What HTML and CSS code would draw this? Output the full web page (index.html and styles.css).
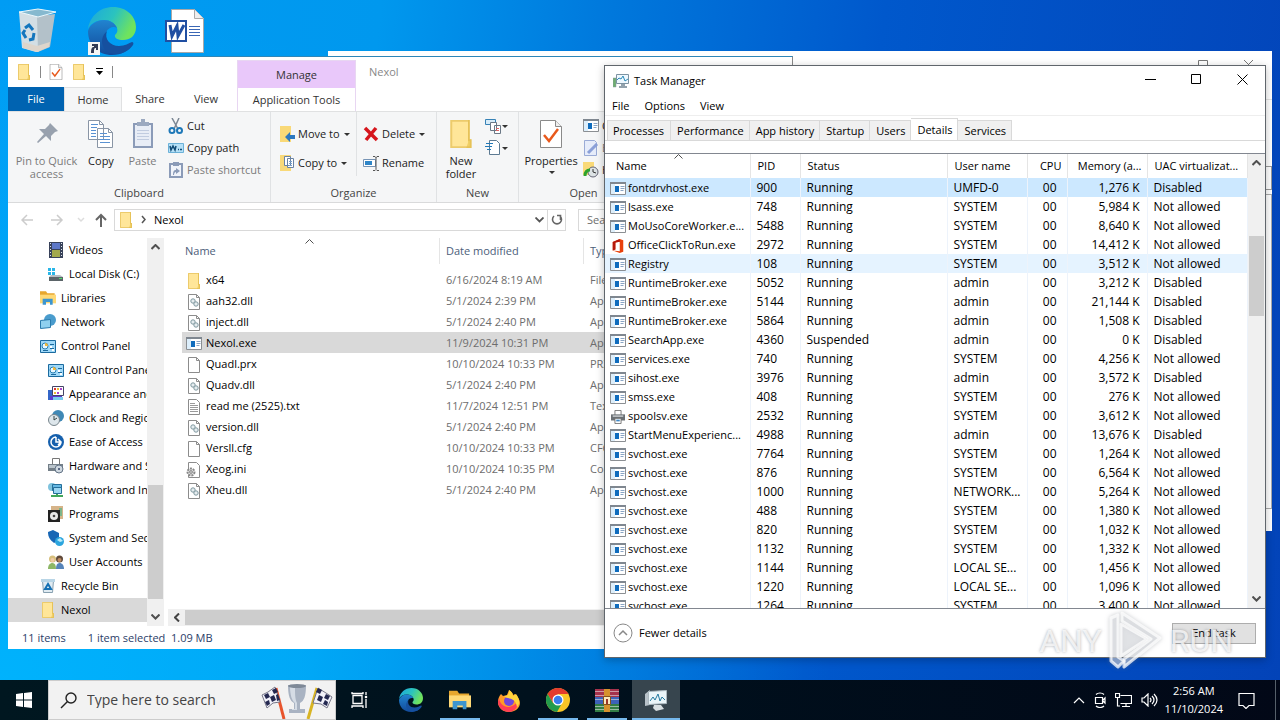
FILE: index.html
```html
<!DOCTYPE html>
<html lang="en">
<head>
<meta charset="utf-8">
<title>Desktop</title>
<link rel="stylesheet" href="styles.css">
</head>
<body>
<svg class="sprite" aria-hidden="true">
  <symbol id="exe" viewBox="0 0 16 14"><path fill="#fff" stroke="#8b8f93" d="M.5.5h15v12H.5z"/><path fill="#7f8790" d="M0 0h16v2H0z"/><path fill="#dceefb" d="M1 2h4v10H1z"/><path fill="#0f6cbd" d="M5 4h4v6H5z"/><path stroke="#8aa5c4" d="M10.500 4.500h4M10.500 6.500h4M10.500 8.500h3"/></symbol>
  <symbol id="folder" viewBox="0 0 16 16"><path fill="#f0cf66" d="M2 0h11v11h1v5H2z"/><path fill="#ffe699" d="M2 0h10v13l-1 3H2z"/><path fill="none" stroke="#dfb94e" d="M2.500.5h10v11h1v4h-11z" opacity=".6"/></symbol>
  <symbol id="page" viewBox="0 0 16 16"><path fill="#fff" stroke="#8c8c8c" d="M2.500.5h8l3 3v12h-11z"/><path fill="none" stroke="#8c8c8c" d="M10.500.5v3h3"/></symbol>
  <symbol id="dll" viewBox="0 0 16 16"><path fill="#fff" stroke="#8c8c8c" d="M2.500.5h8l3 3v12h-11z"/><path fill="none" stroke="#8c8c8c" d="M10.500.5v3h3"/><circle cx="7" cy="7" r="2.200" fill="#e5ecef" stroke="#7f989f"/><circle cx="10" cy="10" r="2.200" fill="#e5ecef" stroke="#7f989f"/></symbol>
  <symbol id="txt" viewBox="0 0 16 16"><path fill="#fff" stroke="#8c8c8c" d="M2.500.5h8l3 3v12h-11z"/><path stroke="#9a9a9a" d="M4 4.500h5M4 6.500h8M4 8.500h8M4 10.500h8M4 12.500h8"/></symbol>
  <symbol id="ini" viewBox="0 0 16 16"><path fill="#fff" stroke="#8c8c8c" d="M2.500.5h8l3 3v12h-11z"/><circle cx="5" cy="10" r="3.500" fill="#ddd" stroke="#888" stroke-width="2" stroke-dasharray="2 1"/><circle cx="5" cy="10" r="1.300" fill="#fff" stroke="#777"/></symbol>
  <symbol id="check" viewBox="0 0 22 28"><path fill="#fff" stroke="#8a8a8a" d="M.5.500h15l6 6v21H.5z"/><path fill="#eee" stroke="#8a8a8a" d="M15.500.5v6h6"/><path fill="none" stroke="#e8591c" stroke-width="2.500" d="M4 15l5 6 9-12"/></symbol>
  <symbol id="office" viewBox="0 0 16 16"><path fill="#e8400c" d="M10 0l4 1.500v13L10 16l-8-3 8 1V3L5 4v8l-3 1V3.500z"/><path fill="#b5180c" d="M2 3.500L10 0v3L5 4v8l-3 1z"/></symbol>
  <symbol id="printer" viewBox="0 0 16 16"><path fill="#fff" stroke="#6b6b6b" d="M4.500.5h7v6h-7z"/><path fill="#6b7074" d="M0 5h16v7H0z"/><path fill="#b9bdc0" d="M2 6h12v2H2z"/><path fill="#fff" stroke="#6b6b6b" d="M4.500 9.500h7v6h-7z"/><path fill="#3b86c6" d="M6 11h4v2H6z"/></symbol>
  <symbol id="cpl" viewBox="0 0 16 13"><path fill="#9ed8f8" stroke="#1b6a9e" d="M.5.5h15v12H.5z"/><circle cx="5" cy="6" r="3" fill="#e9f8ff" stroke="#2780b4"/><path fill="#f1b93c" d="M5 6V3a3 3 0 0 1 3 3z"/><path stroke="#1b6a9e" d="M10 4.500h4M10 8.500h4M3 10.500h5"/><path fill="#fff" d="M10 6h2v2h-2zM12 9h2v2h-2z"/></symbol>
  <symbol id="pulse" viewBox="0 0 16 15"><path fill="#eef8ff" stroke="#7d93a2" d="M3.500.5h12v9h-12z"/><path fill="none" stroke="#2c8bb8" d="M4 6l2-2 2 1 2-3 2 5 3-2"/><path fill="#6fae70" stroke="#8b9ba5" stroke-width=".5" d="M0 4h3v9H0z"/><path fill="#93a2ad" d="M8 10h4v2h2v2H6v-2h2z"/></symbol>
  <symbol id="edge" viewBox="0 0 48 48"><defs><linearGradient id="eg" x1="0" y1="0" x2="1" y2=".4"><stop offset="0" stop-color="#1ba7df"/><stop offset=".55" stop-color="#2bc3be"/><stop offset="1" stop-color="#70e35d"/></linearGradient><linearGradient id="eb" x1="0" y1="0" x2="0" y2="1"><stop offset="0" stop-color="#2184d0"/><stop offset="1" stop-color="#124a9a"/></linearGradient></defs><path fill="url(#eg)" d="M0 22C2 9 12 0 25 0c14 0 23 10 23 20 0 9-6 13-13 13-5 0-9-2-8-5 2-2 3-4 2-7-2-5-7-8-13-8C8 13 2 17 0 22z"/><path fill="url(#eb)" d="M0 24c2-7 9-11 16-11 6 0 11 3 13 8-3-2-8-1-11 4-4 8 3 17 14 17 5 0 9-2 12-4-3 5-10 10-20 10C10 48 0 38 0 24z"/><path fill="#16509f" d="M19 24c-3 8 3 15 12 15 6 0 10-3 13-4 1 0 2 1 1 3-4 6-11 9-17 9-13 0-19-14-9-23z"/></symbol>
  <symbol id="libs" viewBox="0 0 24 20"><path fill="#e7a72e" d="M0 0h9l2 3h11v5H0z"/><path fill="#ffd976" d="M0 5h24v13H0z"/><path fill="#3d95cf" d="M4 11h15v9h-4v-4H9v4H4z"/></symbol>
</svg>

<main class="desktop">
  <div class="shortcuts">
    <svg width="44" height="48" viewBox="0 0 44 48"><path fill="#d3dee4" d="M4 5l19 4 1 36-3 0-14-4z"/><path fill="#b3c1c9" d="M22 9l18-2-5 33-12 5z"/><path fill="#86b9cf" stroke="#eef8fc" d="M4 5l19-3 18 3-18 5z"/><path fill="#ded5cb" d="M8 35l14 4 13-4-1 5-12 5-14-4z"/><g fill="none" stroke="#1476bd" stroke-width="3"><path d="M10 21l4-3 4 5M19 26l-1 6-4 1M11 31l-3-5 2-3"/></g></svg>
    <svg class="edge-shortcut" width="48" height="48" viewBox="0 0 48 48"><use href="#edge"/><path fill="#f5f5f5" d="M0 35h12v13H0z"/><path fill="#333b55" d="M3 46c0-5 1-6 3-6v-1H4v-2h6v6H8v-2c-2 0-2 1-2 5z"/></svg>
    <svg width="40" height="44" viewBox="0 0 40 44"><path fill="#fff" stroke="#a8a8a8" d="M6.500.5h23l9 9v34h-32z"/><path fill="#eee" stroke="#aaa" d="M29.500.5v9h9"/><path stroke="#3b67b5" d="M24 17.500h11M24 20.500h11M24 23.500h11M24 26.500h11"/><path fill="#fff" stroke="#204fa2" stroke-width="2" d="M1 12h20v20H1z"/><path fill="none" stroke="#204fa2" stroke-width="3" d="M5 16l2 11 5-10 1 10 6-11"/></svg>
  </div>

  <section class="window back" aria-label="Background window">
    <div class="back-title"><svg width="60" height="12" viewBox="0 0 60 12" fill="none" stroke="#777"><path d="M2.500 1.500h9v9h-9zM48 1l9 9M57 1l-9 9"/></svg></div>
    <div class="back-tools"></div>
    <div class="back-body"></div>
  </section>

  <section class="window explorer" aria-label="Nexol">
    <header class="ex-head">
      <div class="ex-left">
        <div class="quick">
          <svg width="16" height="16"><use href="#folder"/></svg><i></i>
          <svg width="14" height="16"><use href="#check"/></svg>
          <svg width="16" height="16"><use href="#folder"/></svg>
          <svg width="9" height="8" viewBox="0 0 9 8"><path d="M1 0h7v1H1zM1 3h7L4.500 7z"/></svg><i></i>
        </div>
        <nav class="tabs"><button class="file">File</button><button class="on">Home</button><button>Share</button><button>View</button></nav>
      </div>
      <div class="manage"><div>Manage</div><button>Application Tools</button></div>
      <div class="ex-title">Nexol</div>
    </header>

    <div class="ribbon">
      <div class="group clipboard">
        <div class="body">
          <button class="big off pin"><svg width="30" height="30" viewBox="0 0 30 30"><path fill="#98a1ae" d="M18 4l8 8-3 1-4 4v5l-5-5-8 7-1-1 7-8-5-5h6l4-4z"/></svg>Pin to Quick<br>access</button>
          <button class="big copy"><svg width="26" height="30" viewBox="0 0 26 30"><path fill="#fff" stroke="#8995a5" d="M.5 1.500h11l4 4v15H.5zM9.500 9.500h11l4 4v15h-15z"/><path stroke="#5a92d2" d="M3 5.500h7M3 8.500h6M3 11.500h5M3 14.500h5M3 17.500h5M12 14.500h7M12 17.500h10M12 20.500h10M12 23.500h10"/><path fill="none" stroke="#8995a5" d="M20.500 9.500v4h4M11.500 1.500v4h4"/></svg>Copy</button>
          <button class="big off paste"><svg width="22" height="30" viewBox="0 0 22 30"><path fill="#e8edf6" stroke="#8b9bb8" stroke-width="2" d="M2 5h18v23H2z"/><path fill="#9ba9c0" d="M5 3h4V0h4v3h4v4H5z"/><path stroke="#c1cce0" d="M5 11.500h12M5 14.500h12M5 17.500h12M5 20.500h12"/></svg>Paste</button>
          <div class="stack">
            <button><svg width="16" height="16" viewBox="0 0 16 16"><path stroke="#7b8794" stroke-width="1.500" d="M4 0l6 11M11 0L6 11"/><g fill="none" stroke="#1e78b8" stroke-width="2"><circle cx="4" cy="12.500" r="2.500"/><circle cx="11.500" cy="12.500" r="2.500"/></g></svg>Cut</button>
            <button><svg width="16" height="16" viewBox="0 0 16 16"><path fill="#b5e0f7" stroke="#6bb1d8" d="M.5 3.500h15v9H.5z"/><path fill="none" stroke="#124c77" stroke-width="1.500" d="M2 6l1 4 2-4 2 4 1-4M10 9.500h1M12 9.500h2"/></svg>Copy path</button>
            <button class="off"><svg width="16" height="16" viewBox="0 0 16 16"><path fill="#f1f4fa" stroke="#8b9bb8" stroke-width="2" d="M2 2h12v13H2z"/><path fill="#8b9bb8" d="M5 0h6v4H5zM5 13c0-4 1-5 3-5V6l4 3-4 3v-2c-1 0-2 1-2 3z"/></svg>Paste shortcut</button>
          </div>
        </div>
        <div class="caption">Clipboard</div>
      </div>
      <div class="group organize">
        <div class="body">
          <div class="stack pair">
            <button><svg width="16" height="16" viewBox="0 0 16 16"><path fill="#f9d978" d="M1 0h11v16H1z"/><path fill="#2d78bf" d="M16 9v4h-5v3l-5-5 5-5v3z"/></svg>Move to<b class="caret"></b></button>
            <button><svg width="16" height="16" viewBox="0 0 16 16"><path fill="#f9d978" d="M1 0h11v16H1z"/><path fill="#fff" stroke="#6982a3" d="M5.500 1.500h6v9h-6zM8.500 3.500h6v9h-6z"/><path stroke="#76a0cc" d="M10 6.500h3M10 8.500h3M10 10.500h3"/></svg>Copy to<b class="caret"></b></button>
          </div>
          <div class="stack pair second">
            <button><svg width="16" height="16" viewBox="0 0 16 16"><path stroke="#d6161d" stroke-width="3.500" d="M2 2l12 12M13 2L3 14"/></svg>Delete<b class="caret"></b></button>
            <button><svg width="16" height="16" viewBox="0 0 16 16"><path fill="#fff" stroke="#7794b5" d="M.5 4.500h12v7H.5z"/><path fill="#2f86c8" d="M2 6h7v4H2z"/><path fill="none" stroke="#555" d="M10 1.500h2l1 1 1-1h2M13 2v12M10 15.500h2l1-1 1 1h2"/></svg>Rename</button>
          </div>
        </div>
        <div class="caption">Organize</div>
      </div>
      <div class="group new">
        <div class="body">
          <button class="big newf"><svg width="28" height="30"><use href="#folder"/></svg>New<br>folder</button>
          <div class="stack">
            <button aria-label="New item"><svg width="16" height="16" viewBox="0 0 16 16"><path fill="#d7ecf9" stroke="#3782b6" d="M.5 1.500h10v5H.5z"/><path fill="#fff" stroke="#6b7886" d="M5.500 4.500h6v8h-6zM9.500 7.500h6v8h-6z"/><path stroke="#d66" d="M11 10.500h3M11 12.500h3"/></svg><b class="caret"></b></button>
            <button aria-label="Easy access"><svg width="16" height="16" viewBox="0 0 16 16"><path fill="#fff" stroke="#5d7a92" d="M4.500.5h7l3 3v11h-10z"/><path stroke="#2179b8" d="M1 3.500h7M0 6.500h7M2 9.500h4"/></svg><b class="caret"></b></button>
          </div>
        </div>
        <div class="caption">New</div>
      </div>
      <div class="group open">
        <div class="body">
          <button class="big props"><svg width="22" height="30"><use href="#check"/></svg>Properties<b class="caret"></b></button>
          <div class="stack">
            <button><svg width="16" height="14"><use href="#exe"/></svg>Open</button>
            <button class="off"><svg width="16" height="16" viewBox="0 0 16 16"><path fill="#e6ecfa" stroke="#9aabd6" d="M1.500.5h10l2 2v13h-12z"/><path stroke="#8ba0d8" stroke-width="3" d="M5 13l9-9"/></svg>Edit</button>
            <button><svg width="16" height="16" viewBox="0 0 16 16"><path fill="#f9d978" d="M0 0h11v13H0z"/><circle cx="10" cy="10" r="5" fill="#dde3e5" stroke="#667"/><path fill="none" stroke="#2da32d" stroke-width="3" d="M2 14c0-4 2-6 5-6"/><path fill="none" stroke="#333" d="M10 7v3l3 1"/></svg>History</button>
          </div>
        </div>
        <div class="caption">Open</div>
      </div>
    </div>

    <div class="address">
      <svg class="arrows" width="86" height="16" viewBox="0 0 86 16" fill="none" stroke-width="1.500"><path stroke="#ccc" d="M12 8H1M6 3L1 8l5 5M30 8h11M36 3l5 5-5 5"/><path stroke="#ddd" d="M57 6l3 3 3-3"/><path stroke="#666" stroke-width="2" d="M80 15V3M75 8l5-5 5 5"/></svg>
      <div class="path"><svg width="16" height="16"><use href="#folder"/></svg><svg width="6" height="9" viewBox="0 0 6 9"><path fill="none" stroke="#555" stroke-width="1.500" d="M1 1l3 3.500L1 8"/></svg><span>Nexol</span>
        <svg width="9" height="6" viewBox="0 0 9 6"><path fill="none" stroke="#555" stroke-width="1.800" d="M.5.5l4 4 4-4"/></svg></div>
      <button class="refresh" aria-label="Refresh"><svg width="12" height="13" viewBox="0 0 12 13"><path fill="none" stroke="#666" stroke-width="1.600" d="M3 3a4.500 4.500 0 1 0 6 0M9.500 7V2.500H6"/></svg></button>
      <input class="find" type="search" aria-label="Search Nexol" placeholder="Search Nexol">
    </div>

    <div class="content">
      <nav class="tree">
        <a href="#" class="sub"><svg width="16" height="16" viewBox="0 0 16 16"><path fill="#38425a" d="M1 0h14v16H1z"/><path fill="#5d78c8" d="M4 1h8v6H4z"/><path fill="#a2a94c" d="M4 8h8v7H4z"/><path stroke="#dfe5ee" stroke-dasharray="1 2" d="M2.500 1v14M13.500 1v14"/></svg>Videos</a>
        <a href="#" class="sub"><svg width="16" height="16" viewBox="0 0 16 16"><path fill="#29b6e8" d="M0 2h3v3H0zM4 2h3v3H4zM0 6h3v3H0zM4 6h3v3H4z"/><path fill="#b7bec2" d="M3 9h9l3 2H1z"/><path fill="#5b6468" d="M1 11h14v4H1z"/><path fill="#4be06b" d="M11 12h3v1h-3z"/></svg>Local Disk (C:)</a>
        <a href="#"><svg width="16" height="14"><use href="#libs"/></svg>Libraries</a>
        <a href="#"><svg width="16" height="16" viewBox="0 0 16 16"><circle cx="10" cy="6" r="6" fill="#4a9ccd"/><path fill="#8fd0ef" stroke="#2b7cae" d="M.5 6.500l10-1v8l-10 1z"/></svg>Network</a>
        <a href="#"><svg width="16" height="13"><use href="#cpl"/></svg>Control Panel</a>
        <a href="#" class="sub"><svg width="16" height="13"><use href="#cpl"/></svg>All Control Panel Items</a>
        <a href="#" class="sub"><svg width="16" height="16" viewBox="0 0 16 16"><path fill="#3466c8" d="M0 4h5v10H0z"/><path fill="#fff" stroke="#446" d="M4.500.5h11v9h-11z"/><path fill="#d33" d="M6 2h2v2H6z"/><path fill="#eb3" d="M9 2h2v2H9zM6 6h2v2H6z"/><path fill="#a4c" d="M12 2h2v2h-2zM9 6h2v2H9z"/><path fill="#5b3cd0" d="M2 10h12v4H2z"/><path fill="#7ce" d="M5 11h10v3H5z"/></svg>Appearance and Personalization</a>
        <a href="#" class="sub"><svg width="16" height="16" viewBox="0 0 16 16"><circle cx="10" cy="6" r="6" fill="#3f88b5"/><circle cx="6" cy="10" r="5.500" fill="#dde6eb" stroke="#78858c"/><path fill="none" stroke="#344" d="M6 6v4l3-2"/></svg>Clock and Region</a>
        <a href="#" class="sub"><svg width="16" height="16" viewBox="0 0 16 16"><circle cx="8" cy="8" r="8" fill="#1660ad"/><path fill="none" stroke="#fff" stroke-width="1.500" d="M13 8a5 5 0 1 1-5-5M8 3v5h5M10 5l3 3-3 3"/></svg>Ease of Access</a>
        <a href="#" class="sub"><svg width="16" height="16" viewBox="0 0 16 16"><path fill="#fff" stroke="#777" d="M4.500.5h7v6h-7z"/><path fill="#747f88" d="M0 6h15v7H0z"/><path fill="#bac4cb" d="M1 7h8v3H1z"/><circle cx="11" cy="11" r="4" fill="#cfd8e0" stroke="#647487"/><circle cx="11" cy="11" r="1" fill="#346"/></svg>Hardware and Sound</a>
        <a href="#" class="sub"><svg width="16" height="16" viewBox="0 0 16 16"><circle cx="4" cy="5" r="4" fill="#7fc3de"/><path fill="#66b9e4" stroke="#246f9b" d="M4.500 2.500h9v6h-9z"/><path fill="#9ad6f1" stroke="#246f9b" d="M5.500 5.500h8v6h-8z"/><path fill="#40a75a" d="M3 13h12v2H3zM8 12h2v3H8z"/></svg>Network and Internet</a>
        <a href="#" class="sub"><svg width="16" height="16" viewBox="0 0 16 16"><path fill="#d6b489" d="M3 0h12v13H3z"/><path fill="#7db58b" d="M11 2h3v8h-3z"/><path fill="#222" d="M0 4h12v12H0z"/><circle cx="6" cy="10" r="4" fill="#e8e8e8"/><circle cx="6" cy="10" r="1.300" fill="#444"/></svg>Programs</a>
        <a href="#" class="sub"><svg width="16" height="16" viewBox="0 0 16 16"><path fill="#1766b5" d="M0 2l5-2 6 3v5c-1 3-3 4-5 5C2 10 0 7 0 2z"/><circle cx="11.500" cy="11.500" r="4.500" fill="#2ca5de"/><path fill="#b8ebfa" d="M9 10l3-2 3 3-3 1z"/></svg>System and Security</a>
        <a href="#" class="sub"><svg width="16" height="16" viewBox="0 0 16 16"><circle cx="4.500" cy="5" r="3.500" fill="#d7bf7c"/><circle cx="11.500" cy="5" r="3.500" fill="#5f4939"/><circle cx="4.500" cy="6" r="2" fill="#f1cba6"/><circle cx="11.500" cy="6" r="2" fill="#be8b62"/><path fill="#8db765" d="M0 15c0-4 2-6 4.500-6S8 11 8 15z"/><path fill="#5684b9" d="M8 15c0-4 1-6 3.500-6S16 11 16 15z"/></svg>User Accounts</a>
        <a href="#"><svg width="16" height="16" viewBox="0 0 16 16"><path fill="#e0ebf2" stroke="#87a0b0" d="M2.500 2.500h11l-1 12h-9z"/><path fill="#b8d5e6" d="M1 1h14v3H1z"/><path fill="none" stroke="#1570b3" stroke-width="2" d="M5 11l3-5 3 5z"/></svg>Recycle Bin</a>
        <a href="#" class="on"><svg width="16" height="16"><use href="#folder"/></svg>Nexol</a>
      </nav>
      <div class="vbar tree-bar"><svg width="9" height="6"><path d="M.5 5l4-4 4 4"/></svg><div class="thumb"></div><svg width="9" height="6"><path d="M.5.5l4 4 4-4"/></svg></div>
      <div class="files">
        <table>
          <colgroup><col class="c-name"><col class="c-date"><col></colgroup>
          <thead><tr><th><span>Name</span><svg class="sort" width="9" height="5"><path d="M.5 4.500l4-4 4 4"/></svg></th><th><span>Date modified</span></th><th><span>Type</span></th></tr></thead>
          <tbody>
            <tr><td><svg><use href="#folder"/></svg>x64</td><td>6/16/2024 8:19 AM</td><td>File folder</td></tr>
            <tr><td><svg><use href="#dll"/></svg>aah32.dll</td><td>5/1/2024 2:39 PM</td><td>Application extension</td></tr>
            <tr><td><svg><use href="#dll"/></svg>inject.dll</td><td>5/1/2024 2:40 PM</td><td>Application extension</td></tr>
            <tr class="on"><td><svg><use href="#exe"/></svg>Nexol.exe</td><td>11/9/2024 10:31 PM</td><td>Application</td></tr>
            <tr><td><svg><use href="#page"/></svg>Quadl.prx</td><td>10/10/2024 10:33 PM</td><td>PRX File</td></tr>
            <tr><td><svg><use href="#dll"/></svg>Quadv.dll</td><td>5/1/2024 2:40 PM</td><td>Application extension</td></tr>
            <tr><td><svg><use href="#txt"/></svg>read me (2525).txt</td><td>11/7/2024 12:51 PM</td><td>Text Document</td></tr>
            <tr><td><svg><use href="#dll"/></svg>version.dll</td><td>5/1/2024 2:40 PM</td><td>Application extension</td></tr>
            <tr><td><svg><use href="#page"/></svg>Versll.cfg</td><td>10/10/2024 10:33 PM</td><td>CFG File</td></tr>
            <tr><td><svg><use href="#ini"/></svg>Xeog.ini</td><td>10/10/2024 10:35 PM</td><td>Configuration settings</td></tr>
            <tr><td><svg><use href="#dll"/></svg>Xheu.dll</td><td>5/1/2024 2:40 PM</td><td>Application extension</td></tr>
          </tbody>
        </table>
        <div class="hbar"><svg width="6" height="9" viewBox="0 0 6 9"><path fill="none" stroke="#444" stroke-width="2" d="M5 .5l-4 4 4 4"/></svg><div class="thumb"></div></div>
      </div>
    </div>
    <footer class="status"><span>11 items</span><span>1 item selected&nbsp; 1.09 MB</span></footer>
  </section>

  <section class="window taskman" aria-label="Task Manager">
    <header class="tm-title"><svg width="16" height="15"><use href="#pulse"/></svg><h1>Task Manager</h1>
      <button aria-label="Minimize"><svg width="11" height="11"><path d="M0 5.500h11"/></svg></button>
      <button aria-label="Maximize"><svg width="11" height="11"><path d="M.5.5h9v9h-9z"/></svg></button>
      <button aria-label="Close"><svg width="11" height="11"><path d="M.5.5l10 10M10.500.5l-10 10"/></svg></button>
    </header>
    <nav class="menu"><button>File</button><button>Options</button><button>View</button></nav>
    <div class="tm-tabs"><button>Processes</button><button>Performance</button><button>App history</button><button>Startup</button><button>Users</button><button class="on">Details</button><button>Services</button></div>
    <div class="grid">
      <div class="scroller">
        <table>
          <colgroup><col class="g-name"><col class="g-pid"><col class="g-status"><col class="g-user"><col class="g-cpu"><col class="g-mem"><col></colgroup>
          <thead><tr><th>Name<svg class="sort" width="9" height="5"><path d="M.5 4.500l4-4 4 4"/></svg></th><th>PID</th><th>Status</th><th>User name</th><th>CPU</th><th>Memory (a...</th><th>UAC virtualizat...</th></tr></thead>
          <tbody>
            <tr class="on"><td><svg><use href="#exe"/></svg>fontdrvhost.exe</td><td>900</td><td>Running</td><td>UMFD-0</td><td>00</td><td>1,276 K</td><td>Disabled</td></tr>
            <tr><td><svg><use href="#exe"/></svg>lsass.exe</td><td>748</td><td>Running</td><td>SYSTEM</td><td>00</td><td>5,984 K</td><td>Not allowed</td></tr>
            <tr><td><svg><use href="#exe"/></svg>MoUsoCoreWorker.e...</td><td>5488</td><td>Running</td><td>SYSTEM</td><td>00</td><td>8,640 K</td><td>Not allowed</td></tr>
            <tr><td><svg><use href="#office"/></svg>OfficeClickToRun.exe</td><td>2972</td><td>Running</td><td>SYSTEM</td><td>00</td><td>14,412 K</td><td>Not allowed</td></tr>
            <tr class="hover"><td><svg><use href="#exe"/></svg>Registry</td><td>108</td><td>Running</td><td>SYSTEM</td><td>00</td><td>3,512 K</td><td>Not allowed</td></tr>
            <tr><td><svg><use href="#exe"/></svg>RuntimeBroker.exe</td><td>5052</td><td>Running</td><td>admin</td><td>00</td><td>3,212 K</td><td>Disabled</td></tr>
            <tr><td><svg><use href="#exe"/></svg>RuntimeBroker.exe</td><td>5144</td><td>Running</td><td>admin</td><td>00</td><td>21,144 K</td><td>Disabled</td></tr>
            <tr><td><svg><use href="#exe"/></svg>RuntimeBroker.exe</td><td>5864</td><td>Running</td><td>admin</td><td>00</td><td>1,508 K</td><td>Disabled</td></tr>
            <tr><td><svg><use href="#exe"/></svg>SearchApp.exe</td><td>4360</td><td>Suspended</td><td>admin</td><td>00</td><td>0 K</td><td>Disabled</td></tr>
            <tr><td><svg><use href="#exe"/></svg>services.exe</td><td>740</td><td>Running</td><td>SYSTEM</td><td>00</td><td>4,256 K</td><td>Not allowed</td></tr>
            <tr><td><svg><use href="#exe"/></svg>sihost.exe</td><td>3976</td><td>Running</td><td>admin</td><td>00</td><td>3,572 K</td><td>Disabled</td></tr>
            <tr><td><svg><use href="#exe"/></svg>smss.exe</td><td>408</td><td>Running</td><td>SYSTEM</td><td>00</td><td>276 K</td><td>Not allowed</td></tr>
            <tr><td><svg><use href="#printer"/></svg>spoolsv.exe</td><td>2532</td><td>Running</td><td>SYSTEM</td><td>00</td><td>3,612 K</td><td>Not allowed</td></tr>
            <tr><td><svg><use href="#exe"/></svg>StartMenuExperienc...</td><td>4988</td><td>Running</td><td>admin</td><td>00</td><td>13,676 K</td><td>Disabled</td></tr>
            <tr><td><svg><use href="#exe"/></svg>svchost.exe</td><td>7764</td><td>Running</td><td>SYSTEM</td><td>00</td><td>1,264 K</td><td>Not allowed</td></tr>
            <tr><td><svg><use href="#exe"/></svg>svchost.exe</td><td>876</td><td>Running</td><td>SYSTEM</td><td>00</td><td>6,564 K</td><td>Not allowed</td></tr>
            <tr><td><svg><use href="#exe"/></svg>svchost.exe</td><td>1000</td><td>Running</td><td>NETWORK...</td><td>00</td><td>5,264 K</td><td>Not allowed</td></tr>
            <tr><td><svg><use href="#exe"/></svg>svchost.exe</td><td>488</td><td>Running</td><td>SYSTEM</td><td>00</td><td>1,380 K</td><td>Not allowed</td></tr>
            <tr><td><svg><use href="#exe"/></svg>svchost.exe</td><td>820</td><td>Running</td><td>SYSTEM</td><td>00</td><td>1,032 K</td><td>Not allowed</td></tr>
            <tr><td><svg><use href="#exe"/></svg>svchost.exe</td><td>1132</td><td>Running</td><td>SYSTEM</td><td>00</td><td>1,332 K</td><td>Not allowed</td></tr>
            <tr><td><svg><use href="#exe"/></svg>svchost.exe</td><td>1144</td><td>Running</td><td>LOCAL SE...</td><td>00</td><td>1,456 K</td><td>Not allowed</td></tr>
            <tr><td><svg><use href="#exe"/></svg>svchost.exe</td><td>1220</td><td>Running</td><td>LOCAL SE...</td><td>00</td><td>1,096 K</td><td>Not allowed</td></tr>
            <tr><td><svg><use href="#exe"/></svg>svchost.exe</td><td>1264</td><td>Running</td><td>SYSTEM</td><td>00</td><td>3,400 K</td><td>Not allowed</td></tr>
          </tbody>
        </table>
      </div>
      <div class="vbar grid-bar"><svg width="9" height="6"><path d="M.5 5l4-4 4 4"/></svg><div class="thumb"></div><svg width="9" height="6"><path d="M.5.5l4 4 4-4"/></svg></div>
    </div>
    <footer class="tm-foot">
      <button class="fewer"><svg width="20" height="20" viewBox="0 0 20 20" fill="none" stroke="#888"><circle cx="10" cy="10" r="9"/><path stroke-width="1.500" d="M6 12l4-4 4 4"/></svg>Fewer details</button>
      <button class="end">End task</button>
    </footer>
  </section>

  <div class="mark"><span>ANY</span><svg width="56" height="62" viewBox="0 0 56 62"><g fill="#e4e6ea" fill-opacity=".5" stroke="#fff" stroke-width="3" stroke-linejoin="round" stroke-opacity=".75"><path d="M3 8l7-3v42l6 4 0 0-6 6-7-6z"/><path d="M14 3l38 25-36 29v-8l27-20-29-18z"/><path d="M13 14l26 15-26 17z"/></g></svg><span>RUN</span></div>
</main>

<footer class="taskbar">
  <button class="start" aria-label="Start"><svg width="16" height="16" viewBox="0 0 16 16"><path fill="#fff" d="M0 2l7-1v6.500H0zM8 1l8-1v7.500H8zM0 8.500h7V15l-7-1zM8 8.500h8V16l-8-1z"/></svg></button>
  <label class="search">
    <svg width="17" height="17" viewBox="0 0 17 17" fill="none" stroke="#222" stroke-width="1.400"><circle cx="11" cy="6" r="5"/><path d="M7.500 9.500L1 16"/></svg>
    <input type="text" placeholder="Type here to search" aria-label="Type here to search">
    <svg width="74" height="37" viewBox="0 0 74 37"><g><path stroke="#e8542c" stroke-width="3" d="M16 6l8 31"/><path fill="#f2f2fa" stroke="#778" d="M2 13l6-3 7-5 5 15-7 1-6 5z"/><path fill="#242850" d="M4 13l4-2 2 4-4 2zM12 8l4-2 2 4-4 2zM10 15l4-2 2 5-4 2zM5 20l4-2 1 4-3 2zM16 13l2-1 2 6-3 1z"/></g><g><path stroke="#d8b423" stroke-width="3" d="M57 6l-9 31"/><path fill="#f2f2fa" stroke="#778" d="M72 15l-6-4-8-5-5 15 8 1 6 4z"/><path fill="#242850" d="M70 14l-4-2-2 4 4 2zM62 8l-4-2-2 4 4 2zM63 15l-4-2-2 5 4 2zM68 20l-3-2-2 4 4 2z"/></g><path fill="#a9b3c2" d="M28 3h18c0 11-2 16-6 18v6h5v4H29v-4h5v-6c-4-2-6-7-6-18z"/><path fill="#d5dce5" d="M30 4h5c0 8 0 13 2 17v7h-5v-1h3v-6c-3-2-5-8-5-17z"/><ellipse cx="37" cy="4" rx="9" ry="2" fill="#7e8997"/></svg>
  </label>
  <button class="view" aria-label="Task View"><svg width="18" height="18" viewBox="0 0 18 18" fill="none" stroke="#fff" stroke-width="1.300"><path d="M2 4.500h9v8H2zM1 1v1.500h11V1M1 17v-2h11v2M15 1v3M15 8v9"/><path fill="#fff" d="M14.500 5.500h1v1h-1z"/></svg></button>
  <nav class="apps">
    <button aria-label="Microsoft Edge"><svg width="24" height="24"><use href="#edge"/></svg></button>
    <button class="run" aria-label="File Explorer"><svg width="22" height="20"><use href="#libs"/></svg></button>
    <button aria-label="Firefox"><svg width="24" height="24" viewBox="0 0 24 24"><path fill="#ff9a28" d="M4 6l2 2 4-1 2-5c2 1 4 3 4 5l2-1c3 3 5 6 5 9 0 5-5 9-11 9S1 20 1 14c0-3 1-6 3-8z"/><path fill="#ff3d56" d="M2 10c1 7 7 11 13 8 3-1 5-3 6-6 1 7-4 12-9 12S1 20 1 14z"/><circle cx="12" cy="13" r="5" fill="#7046dd"/><path fill="#ffd43c" d="M12 2c3 2 4 4 4 6l3-2c4 5 4 10 1 13-1-7-5-8-9-9-2 0-3-1-4-2 4 0 5-2 5-6z"/></svg></button>
    <button class="run" aria-label="Chrome"><svg width="24" height="24" viewBox="0 0 24 24"><circle cx="12" cy="12" r="12" fill="#f9c526"/><path fill="#e33b2e" d="M1.600 6A12 12 0 0 1 22.400 6H12L7 15z"/><path fill="#239b4c" d="M1.600 6L7 15l8 2-4 7A12 12 0 0 1 1.600 6z"/><circle cx="12" cy="12" r="5.500" fill="#fff"/><circle cx="12" cy="12" r="4.300" fill="#3a7ded"/></svg></button>
    <button class="run" aria-label="WinRAR"><svg width="24" height="23" viewBox="0 0 24 23"><path fill="#a6324c" d="M0 0h24v8H0z"/><path fill="#3d62b8" d="M0 8h24v7H0z"/><path fill="#327d45" d="M0 15h24v8H0z"/><path stroke="#eee" opacity=".55" d="M0 2.500h24M0 6.500h24M0 10.500h24M0 17.500h24M0 20.500h24"/><path fill="#d6912e" d="M9 0h6v23H9z"/><path fill="#fbe7bd" stroke="#85511a" d="M8.500 7.500h7v8h-7z"/><path fill="#9b3427" d="M11 10h2v5h-2z"/></svg></button>
    <button class="run active" aria-label="Task Manager"><svg width="24" height="22" viewBox="0 0 24 22"><path fill="#b8c2c9" d="M1 5l5-4v15l-5 1z"/><path fill="#eaf5f9" stroke="#abb8bf" d="M4.500 2.500l18-1v13l-18 1z"/><path fill="none" stroke="#24799f" d="M6 12l3-4 2 3 3-6 2 7 2-4 3 3"/><path fill="#d8dfe2" d="M10 16h7l3 4-8 2-3-3z"/></svg></button>
  </nav>
  <div class="tray">
    <svg width="12" height="8" viewBox="0 0 12 8"><path d="M1 7l5-5 5 5"/></svg>
    <svg width="12" height="16" viewBox="0 0 12 16"><path d="M1.500 5.500h7v6h-7zM9 8l2-2v5L9 9M2 2.500c2-2 6-2 8 0M2 14c2 2 6 2 8 0"/></svg>
    <svg width="17" height="14" viewBox="0 0 17 14"><path d="M5.500 2.500h11v8h-11M11 10v3M7 13.500h8M.5.5h4v4h-4zM2.500 5v8H5"/></svg>
    <svg width="17" height="14" viewBox="0 0 17 14"><path d="M1 5v4h2l4 4V1L3 5zM9 5q2 2 0 4M11 3q4 4 0 8M13 1q6 6 0 12"/></svg>
    <time>2:56 AM<br>11/10/2024</time>
    <svg class="notify" width="17" height="17" viewBox="0 0 17 17"><path d="M1 1.500h15v12h-5l-3 3-3-3H1z"/></svg>
  </div>
  <button class="peek" aria-label="Show desktop"></button>
</footer>
</body>
</html>
```
FILE: styles.css
```css
* { box-sizing: border-box; }
body {
  margin: 0;
  height: 100vh;
  display: flex;
  flex-direction: column;
  overflow: hidden;
  font: 11px/16px "Open Sans", "Noto Sans", sans-serif;
  color: #000;
}
button { border: 0; padding: 0; background: none; font: inherit; color: inherit; white-space: nowrap; }
a { color: inherit; text-decoration: none; }
input { font: inherit; border: 0; padding: 0; min-width: 0; background: none; }
svg { flex: none; }
table { border-collapse: collapse; table-layout: fixed; width: 100%; }
th { font-weight: 400; text-align: left; }
th, td { padding: 0; white-space: nowrap; overflow: hidden; }
.sprite { position: absolute; width: 0; height: 0; }

.desktop {
  flex: 1;
  position: relative;
  overflow: hidden;
  background:
    radial-gradient(ellipse 65% 100% at 0% 100%, rgba(0, 184, 255, 0.8) 0%, rgba(0, 184, 255, 0) 100%),
    linear-gradient(97deg, #009cf4 0%, #0098ee 28%, #0078dc 45%, #0058cc 65%, #0343b8 100%);
}
.shortcuts { display: flex; align-items: center; gap: 29px; padding: 7px 15px; }

.window { position: absolute; display: flex; flex-direction: column; background: #fff; overflow: hidden; }
.back { inset: 51px 8px 149px 328px; }
.back-title { height: 49px; border-bottom: 1px solid #e4e4e4; display: flex; justify-content: flex-end; align-items: flex-start; padding: 8px 16px; }
.back-tools { margin: 66px 0 4px; height: 24px; border: 1px solid #999; }
.back-body { flex: 1; border: 1px solid #aaa; margin-bottom: 22px; }

/* File explorer */
.explorer { inset: 56px 487px 31px 8px; border-top: 1px solid #2f87b8; border-right: 1px solid #888; }
.ex-head { display: flex; height: 54px; }
.ex-left { width: 229px; display: flex; flex-direction: column; }
.quick { height: 30px; padding: 0 8px; display: flex; align-items: center; gap: 8px; }
.quick i { width: 1px; height: 12px; background: #888; }
.tabs { display: flex; height: 24px; }
.tabs button { width: 56px; color: #333; }
.tabs .file { background: #0063b1; color: #fff; }
.tabs .on { width: 58px; background: #f5f6f7; border: 1px solid #e0e1e2; border-bottom: 0; }
.manage { width: 119px; margin-top: 3px; text-align: center; display: flex; flex-direction: column; border: 1px solid #e8d6f2; border-bottom: 0; }
.manage div { height: 27px; line-height: 27px; background: #e9c8fa; color: #333; }
.manage button { flex: 1; color: #333; }
.ex-title { padding: 7px 13px; color: #888; }

.ribbon { height: 92px; display: flex; background: #f5f6f7; border-top: 1px solid #e0e1e2; border-bottom: 1px solid #d9dadb; color: #222; }
.group { display: flex; flex-direction: column; border-right: 1px solid #e0e2e4; }
.group:last-child { flex: 1; }
.body { height: 72px; display: flex; align-items: flex-start; }
.caption { text-align: center; line-height: 18px; color: #444; }
.big { display: flex; flex-direction: column; align-items: center; line-height: 13px; padding-top: 7px; gap: 4px; }
.big svg { margin-bottom: 1px; }
.big:has(br) { display: block; text-align: center; }
.big:has(br) svg { display: block; margin: 0 auto 5px; }
.off { color: #7b7b7b; }
.stack { display: flex; flex-direction: column; padding-top: 3px; }
.stack button { height: 22px; display: flex; align-items: center; gap: 3px; }
.caret { border: 3px solid transparent; border-top-color: #333; border-bottom: 0; margin-left: 1px; }
.new .caret { margin-left: -2px; }
.pair { padding-top: 11px; gap: 7px; }
.clipboard { width: 263px; }
.pin { width: 77px; }
.copy { width: 32px; }
.paste { width: 51px; }
.organize { width: 166px; }
.organize .body { padding-left: 8px; }
.organize .pair:first-child { width: 78px; margin-right: 6px; border-right: 1px solid #e0e2e4; height: 64px; }
.new { width: 82px; }
.newf { width: 48px; }
.open .props { width: 64px; }
.open .caption { padding-right: 143px; }

.address { height: 33px; display: flex; align-items: center; padding-left: 13px; }
.path { flex: 1; height: 22px; margin-left: 7px; padding: 0 3px; border: 1px solid #d9d9d9; display: flex; align-items: center; gap: 7px; }
.path span { flex: 1; }
.refresh { width: 18px; height: 22px; border: 1px solid #d9d9d9; border-left: 0; display: grid; place-items: center; }
.find { width: 204px; height: 22px; margin: 0 10px 0 12px; padding-left: 8px; border: 1px solid #d9d9d9; }
.find::placeholder { color: #6d6d6d; opacity: 1; }

.content { flex: 1; min-height: 0; display: flex; padding-top: 2px; }
.tree { width: 139px; overflow: hidden; }
.tree a { display: flex; align-items: center; gap: 5px; height: 24px; padding-left: 32px; white-space: nowrap; }
.tree .sub { padding-left: 40px; }
.tree .on { background: #d9d9d9; }
.vbar { width: 17px; background: #f0f0f0; display: flex; flex-direction: column; align-items: center; padding: 6px 0; }
.vbar path, .sort path { fill: none; stroke: #505050; }
.vbar path { stroke-width: 2; }
.vbar .thumb { width: 15px; background: #cdcdcd; }
.tree-bar .thumb { height: 114px; margin: auto 0 15px; }
.files { flex: 1; min-width: 0; margin-left: 4px; display: flex; flex-direction: column; justify-content: space-between; }
.files table { margin-left: 14px; width: calc(100% - 14px); }
.c-name { width: 257px; }
.c-date { width: 144px; }
.files th { height: 31px; vertical-align: top; color: #4c607a; position: relative; }
.files th span { display: block; height: 26px; line-height: 26px; padding-left: 6px; border-left: 1px solid #e5e5e5; }
.files th:first-child span { padding-left: 3px; border: 0; }
.sort { position: absolute; left: 123px; top: 1px; }
.files td { height: 21px; line-height: 21px; padding-left: 7px; color: #6d6d6d; }
.files td:first-child { padding-left: 4px; color: #000; }
.files td svg { width: 16px; height: 16px; margin-right: 4px; vertical-align: middle; }
.files .on td { background: #d9d9d9; }
.hbar { height: 17px; background: #f0f0f0; display: flex; align-items: center; padding-left: 6px; gap: 5px; }
.hbar .thumb { flex: 1; height: 15px; background: #cdcdcd; }
.status { height: 23px; display: flex; align-items: center; gap: 22px; padding-left: 14px; color: #2b3e68; }

/* Task Manager */
.taskman { inset: 65px 14px 22px 604px; border: 1px solid #60666c; box-shadow: 0 2px 8px rgba(0, 0, 0, 0.25); }
.tm-title { height: 30px; display: flex; align-items: center; padding-left: 8px; }
.tm-title h1 { flex: 1; margin: 0 0 0 5px; font-size: 11px; font-weight: 400; }
.tm-title button { width: 46px; height: 30px; }
.tm-title path { fill: none; stroke: #000; }
.menu { height: 20px; display: flex; gap: 15px; padding-left: 7px; border-bottom: 1px solid #eee; }
.tm-tabs { height: 25px; display: flex; align-items: flex-end; padding-left: 2px; border-bottom: 1px solid #d9d9d9; }
.tm-tabs button { height: 20px; padding: 0 5px 0 6px; background: #f0f0f0; border: 1px solid #d9d9d9; border-bottom: 0; border-left-width: 0; }
.tm-tabs button:first-child { border-left-width: 1px; padding-right: 6px; padding-left: 5px; }
.tm-tabs .on { height: 22px; background: #fff; line-height: 19px; }
.grid { flex: 1; min-height: 0; margin-top: 12px; display: flex; border-top: 1px solid #828790; border-bottom: 1px solid #828790; }
.scroller { flex: 1; overflow: hidden; }
.g-name { width: 145px; }
.g-pid { width: 50px; }
.g-status { width: 147px; }
.g-user { width: 80px; }
.g-cpu { width: 40px; }
.g-mem { width: 80px; }
.grid th { height: 24px; padding-left: 7px; border-right: 1px solid #e5e5e5; position: relative; }
.grid th:first-child { padding-left: 11px; }
.grid th:nth-child(5), .grid th:nth-child(6) { text-align: right; padding: 0 5px 0 0; }
.grid .sort { left: 69px; top: 0; }
.grid td { height: 19px; line-height: 18px; padding-left: 6px; border-right: 1px solid #edf3fb; font-size: 12px; }
.grid td:first-child { padding-left: 5px; font-size: 11px; }
.grid td:nth-child(5), .grid td:nth-child(6) { text-align: right; padding: 0 7px 0 0; }
.grid td:nth-child(5) { padding-right: 10px; }
.grid td svg { width: 16px; height: 14px; margin-right: 2px; vertical-align: middle; }
.grid .on td { background: #cce8ff; }
.grid .hover td { background: #e5f3ff; }
.grid-bar .thumb { height: 80px; margin: 70px 0 auto; }
.tm-foot { height: 48px; display: flex; align-items: center; justify-content: space-between; padding: 0 9px 0 8px; }
.fewer { display: flex; align-items: center; gap: 6px; }
.end { width: 84px; height: 21px; background: #e1e1e1; border: 1px solid #adadad; }

.mark {
  position: absolute;
  right: 47px;
  bottom: 8px;
  display: flex;
  align-items: center;
  gap: 6px;
  font: 32px/62px Roboto, sans-serif;
  color: rgba(255, 255, 255, 0.75);
  text-shadow: 0 0 3px rgba(110, 115, 125, 0.6);
  pointer-events: none;
}
.mark svg { filter: drop-shadow(0 0 2px rgba(120, 125, 135, 0.5)); }

/* Taskbar */
.taskbar { height: 40px; display: flex; background: linear-gradient(to right, #001720, #000f1c 55%, #020817); color: #fff; }
.start, .view { width: 48px; display: grid; place-items: center; }
.search { width: 288px; display: flex; align-items: center; gap: 10px; padding: 0 1px 0 11px; background: #f2f2f2; border: 1px solid #ccc; }
.search input { flex: 1; font-size: 14px; }
.search input::placeholder { color: #444; opacity: 1; }
.apps { flex: 1; display: flex; gap: 1px; padding-left: 3px; }
.apps button { width: 48px; display: grid; place-items: center; position: relative; }
.run::after { content: ""; position: absolute; left: 4px; right: 4px; bottom: 0; height: 2px; background: #76b9ed; }
.apps .active { background: #37454e; }
.active::after { left: 0; right: 0; }
.tray { display: flex; align-items: center; gap: 9px; padding-right: 20px; }
.tray path { fill: none; stroke: #fff; stroke-width: 1.2; }
.tray time { text-align: center; line-height: 18px; margin-left: -2px; }
.tray .notify { margin-left: 6px; }
.peek { width: 5px; border-left: 1px solid #56606a; }
```
